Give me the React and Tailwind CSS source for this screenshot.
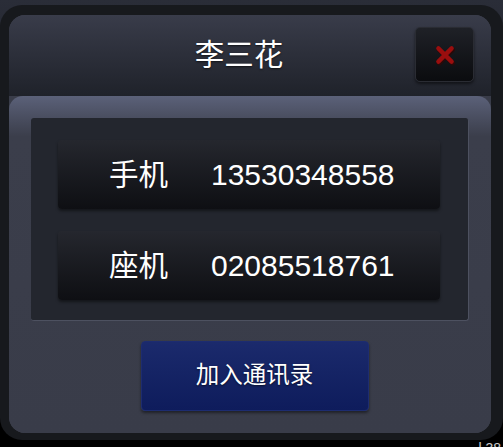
import React from "react";

const font = { fontFamily: '"Liberation Sans", "Noto Sans CJK SC", sans-serif' };

function Row({ label, number }) {
  return (
    <div className="flex h-[69px] items-center rounded-[4px] bg-gradient-to-b from-[#25272e] to-[#0e0f13] pl-[51px] shadow-[0_2px_3px_rgba(0,0,0,0.45)]">
      <span className="w-[102px] text-[29.5px] leading-none text-white">{label}</span>
      <span className="text-[30px] leading-none text-white">{number}</span>
    </div>
  );
}

export default function App() {
  return (
    <div
      className="flex h-[447px] w-[503px] flex-col overflow-hidden bg-gradient-to-b from-[#2a2d38] via-[#15171b] to-black"
      style={font}
    >
      <div className="mt-[5px] h-[435px] shrink-0 rounded-[22px] bg-[#17191d] pb-[7px] pl-[9px] pr-[12px] pt-[10px]">
        <div className="flex h-full flex-col overflow-hidden rounded-[16px] bg-[#393c49]">
          {/* header */}
          <div className="relative flex h-[81px] shrink-0 items-start bg-gradient-to-b from-[#393c4a] to-[#1f222a]">
            <div className="flex h-full flex-1 items-center justify-center pr-[22px] pb-[1px]">
              <span className="text-[29.5px] leading-none text-white [text-shadow:0_1px_2px_rgba(0,0,0,0.6)]">李三花</span>
            </div>
            <button className="absolute right-[17px] top-[12px] flex h-[55px] w-[59px] items-center justify-center rounded-[5px] border border-[#2a2c33] bg-gradient-to-b from-[#1f2127] to-[#0b0c0f] shadow-[0_2px_3px_rgba(0,0,0,0.5)]">
              <svg width="22" height="22" viewBox="0 0 20 20">
                <path d="M4 4 L16 16 M16 4 L4 16" stroke="#2a0a0a" strokeWidth="4.5" strokeLinecap="round" transform="translate(0.8,1.2)" />
                <path d="M4 4 L16 16 M16 4 L4 16" stroke="#9a0e0e" strokeWidth="4" strokeLinecap="round" />
              </svg>
            </button>
          </div>
          {/* body */}
          <div className="flex flex-1 flex-col rounded-t-[14px] bg-gradient-to-b from-[#5b6179] via-[#3b3e4b] via-[12%] to-[#393c49] px-[22px] pt-[22px]">
            <div className="flex flex-col gap-[22px] rounded-[3px] border-b border-r border-[#4d5160] bg-[#23262e] pb-[20px] pl-[27px] pr-[28px] pt-[22px]">
              <Row label="手机" number="13530348558" />
              <Row label="座机" number="02085518761" />
            </div>
            <div className="flex justify-center pl-[9px] pt-[20px]">
              <button className="flex h-[70px] w-[228px] items-center justify-center rounded-[4px] border border-[#1d2c70] bg-gradient-to-b from-[#1b2a6c] to-[#0e1c5c] shadow-[0_2px_3px_rgba(0,0,0,0.45)]">
                <span className="text-[23.5px] leading-none text-white [text-shadow:0_1px_2px_rgba(0,0,0,0.6)]">加入通讯录</span>
              </button>
            </div>
          </div>
        </div>
      </div>
      <div className="flex justify-end pr-[2px] pt-[1px] text-[14px] leading-none text-white/80">
        <span>·l 38</span>
      </div>
    </div>
  );
}
